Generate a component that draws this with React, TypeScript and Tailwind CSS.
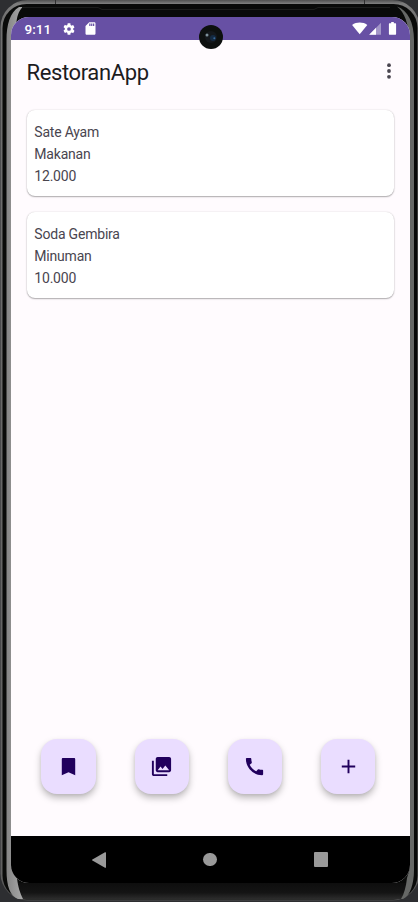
import type { ReactNode } from "react";

const dishes = [
  { name: "Sate Ayam", kind: "Makanan", price: "12.000" },
  { name: "Soda Gembira", kind: "Minuman", price: "10.000" },
];

function Icon({ d, className }: { d: string; className: string }) {
  return (
    <svg viewBox="0 0 24 24" fill="currentColor" className={className}>
      <path d={d} />
    </svg>
  );
}

function DeviceFrame() {
  return (
    <svg viewBox="0 0 418 902" className="absolute inset-0 h-full w-full" aria-hidden="true">
      <defs>
        <linearGradient id="rim" x1="0" y1="0" x2="0" y2="1">
          <stop offset="0" stopColor="#505050" />
          <stop offset="0.004" stopColor="#7c7c7c" />
          <stop offset="0.02" stopColor="#707070" />
          <stop offset="0.97" stopColor="#606060" />
          <stop offset="1" stopColor="#4c4c4c" />
        </linearGradient>
        <linearGradient id="chin" x1="0" y1="0" x2="0" y2="1">
          <stop offset="0" stopColor="#0e0e0e" />
          <stop offset="0.6" stopColor="#141414" />
          <stop offset="1" stopColor="#2c2c2c" />
        </linearGradient>
        <linearGradient id="leftEdge" x1="0" y1="0" x2="1" y2="0">
          <stop offset="0" stopColor="#858585" />
          <stop offset="1" stopColor="#a9a9a9" />
        </linearGradient>
      </defs>
      <rect width="418" height="902" fill="#2d2e31" />
      <rect x="0.5" y="0" width="419" height="900.5" rx="27" fill="url(#rim)" />
      <rect x="2.5" y="4" width="415" height="895.5" rx="24" fill="#090a09" />
      <path d="M12 883H408L402 899H22Z" fill="url(#chin)" />
      <path d="M6.5 40C6.5 25 10 12 19 7h4C18 11 17 17 16 26L11 40V868l6 10c1 9 3 15 6 21h-5C10 896 6.5 886 6.5 870Z" fill="url(#leftEdge)" />
      <path d="M397 6.5c11 4 17 16 17 33.500v830c0 14-4 26-11 29h-2c3-5 5-12 6-21l3-10V40c-2-17-5-27-13-33.500Z" fill="#666866" />
      <path d="M22 7.5H98l4 2H314l4-2H390" fill="none" stroke="#1c1d1c" />
      <path d="M55.5 0v4M364.5 0v4" stroke="#303030" />
    </svg>
  );
}

function StatusBar() {
  return (
    <header className="flex h-[23px] shrink-0 items-center bg-[#6750a4] pr-[12px] pl-[13.5px] text-white">
      <span className="mt-[2px] w-[37.5px] text-[13.5px] leading-[23px] font-medium">9:11</span>
      <Icon
        className="mt-px h-[14px] w-[14px]"
        d="M19.14 12.94c.04-.3.06-.61.06-.94s-.02-.64-.07-.94l2.03-1.58a.5.5 0 0 0 .12-.61l-1.92-3.32a.5.5 0 0 0-.59-.22l-2.39.96a7 7 0 0 0-1.62-.94l-.36-2.54A.5.5 0 0 0 13.92 2h-3.84a.5.5 0 0 0-.48.41l-.36 2.54a7 7 0 0 0-1.62.94l-2.39-.96a.5.5 0 0 0-.59.22L2.72 8.47a.5.5 0 0 0 .12.61l2.03 1.58a7 7 0 0 0 0 2.28l-2.03 1.58a.5.5 0 0 0-.12.61l1.92 3.32c.12.22.37.3.59.22l2.39-.96c.5.4 1.03.7 1.62.94l.36 2.94a.5.5 0 0 0 .48.41h3.84a.5.5 0 0 0 .48-.41l.36-2.54a7 7 0 0 0 1.62-.94l2.39.96c.22.08.47 0 .59-.22l1.92-3.32a.5.5 0 0 0-.12-.61zM12 15.2A3.2 3.2 0 1 1 12 8.8a3.2 3.2 0 0 1 0 6.4z"
      />
      <Icon
        className="ml-[7px] h-[15px] w-[15px]"
        d="M18 2h-8L4 8v12c0 1.1.9 2 2 2h12c1.1 0 2-.9 2-2V4c0-1.1-.9-2-2-2zm-6 6h-2V4h2zm3 0h-2V4h2zm3 0h-2V4h2z"
      />
      <svg viewBox="0 0 46 13" fill="currentColor" className="ml-auto h-[13px] w-[46px]">
        <path d="M7.7 12.3.1 3C4.500-.2 11-.2 15.300 3Z" />
        <path d="M29 .7v12H17.200Z" opacity="0.4" />
        <path d="M24 5.800v6.900H17.200Z" />
        <path d="M39.200 0h2.600v1.300h1.700q.6 0 .6.6v10.200q0 .6-.6.6h-6q-.6 0-.6-.6v-10.200q0-.6.6-.6h1.700z" />
      </svg>
    </header>
  );
}

function Fab({ label, children }: { label: string; children: ReactNode }) {
  return (
    <button
      aria-label={label}
      className="flex h-[54.5px] w-[54.5px] items-center justify-center rounded-[16px] bg-[#eaddff] text-[#21005d] shadow-[0_4px_7px_rgba(0,0,0,0.26),0_1px_3px_rgba(0,0,0,0.06)]"
    >
      {children}
    </button>
  );
}

export default function App() {
  return (
    <div className="relative h-[902px] w-[418px] overflow-hidden font-['Roboto',sans-serif]">
      <DeviceFrame />
      <div className="relative h-full pt-[17px] pr-[8px] pl-[11px]">
        <div className="flex h-[866px] flex-col overflow-hidden rounded-[18px] bg-[#fffbfe]">
          <StatusBar />
          <div className="flex h-[64px] shrink-0 items-center justify-between pr-[19.5px] pl-[15.5px]">
            <h1 className="mt-[2px] text-[22px] leading-[28px] tracking-[-0.38px] text-[#1c1b1f]">RestoranApp</h1>
            <svg viewBox="0 0 4 16" fill="#49454f" className="mt-[-2px] h-[16px] w-[4px]">
              <circle cx="2" cy="2.2" r="1.9" />
              <circle cx="2" cy="8" r="1.9" />
              <circle cx="2" cy="13.8" r="1.9" />
            </svg>
          </div>
          <main className="flex flex-1 flex-col gap-[15.4px] pt-[6px] pr-[15.8px] pl-[15.5px]">
            {dishes.map((dish) => (
              <article
                key={dish.name}
                className="h-[86.2px] rounded-[8px] bg-white pt-[11px] pl-[7.8px] text-[14px] leading-[22.2px] tracking-[-0.2px] text-[#49454f] shadow-[0_1px_1.5px_rgba(0,0,0,0.3),0_0_1.5px_rgba(0,0,0,0.18)]"
              >
                <p>{dish.name}</p>
                <p>{dish.kind}</p>
                <p>{dish.price}</p>
              </article>
            ))}
          </main>
          <div className="flex h-[97px] shrink-0 items-start justify-between pr-[34.6px] pl-[30.3px]">
            <Fab label="Bookmark">
              <Icon className="h-[23px] w-[23px]" d="M17.6 3H6.4C5.4 3 5 3.500 5 4.400V21l7-3 7 3V4.400C19 3.500 18.600 3 17.600 3z" />
            </Fab>
            <Fab label="Gallery">
              <Icon
                className="h-[23px] w-[23px]"
                d="M22 16V4c0-1.1-.9-2-2-2H8c-1.1 0-2 .9-2 2v12c0 1.1.9 2 2 2h12c1.1 0 2-.9 2-2zm-11-4 2.03 2.71L16 11l4 5H8l3-4zM2 6v14c0 1.1.9 2 2 2h14v-2H4V6H2z"
              />
            </Fab>
            <Fab label="Call">
              <Icon
                className="h-[23px] w-[23px]"
                d="M20.01 15.38c-1.23 0-2.42-.2-3.53-.56a.98.98 0 0 0-1.01.24l-1.57 1.97c-2.83-1.35-5.48-3.9-6.89-6.83l1.95-1.66c.27-.28.35-.67.24-1.02-.37-1.11-.56-2.3-.56-3.53 0-.54-.45-.99-.99-.99H4.19C3.65 3 3 3.24 3 3.99 3 13.28 10.73 21 20.01 21c.71 0 .99-.63.99-1.18v-3.45c0-.54-.45-.99-.99-.99z"
              />
            </Fab>
            <Fab label="Add">
              <Icon className="h-[23px] w-[23px]" d="M19 13h-6v6h-2v-6H5v-2h6V5h2v6h6v2z" />
            </Fab>
          </div>
          <nav className="flex h-[47px] shrink-0 items-center justify-between bg-black pr-[82px] pl-[81px] text-[#999]">
            <svg viewBox="0 0 14 16" fill="currentColor" className="h-[16px] w-[14px]">
              <path d="M13 .3q1-.5 1 .5v14.4q0 1-1 .5L.4 8.5q-.8-.5 0-1z" />
            </svg>
            <span className="h-[13.5px] w-[13.5px] rounded-full bg-[#999]" />
            <span className="h-[14.5px] w-[14.5px] rounded-[1px] bg-[#999]" />
          </nav>
        </div>
      </div>
      <svg viewBox="0 0 24 24" className="absolute top-[25px] left-[199px] h-[24px] w-[24px]">
        <circle cx="12" cy="12" r="12" fill="#0d100f" />
        <circle cx="12" cy="12" r="6" fill="#14181c" />
        <circle cx="14" cy="13" r="3" fill="#142a42" />
        <circle cx="8" cy="10" r="1.5" fill="#7d919a" />
        <circle cx="15.3" cy="13.3" r="1" fill="#38699a" />
      </svg>
    </div>
  );
}
